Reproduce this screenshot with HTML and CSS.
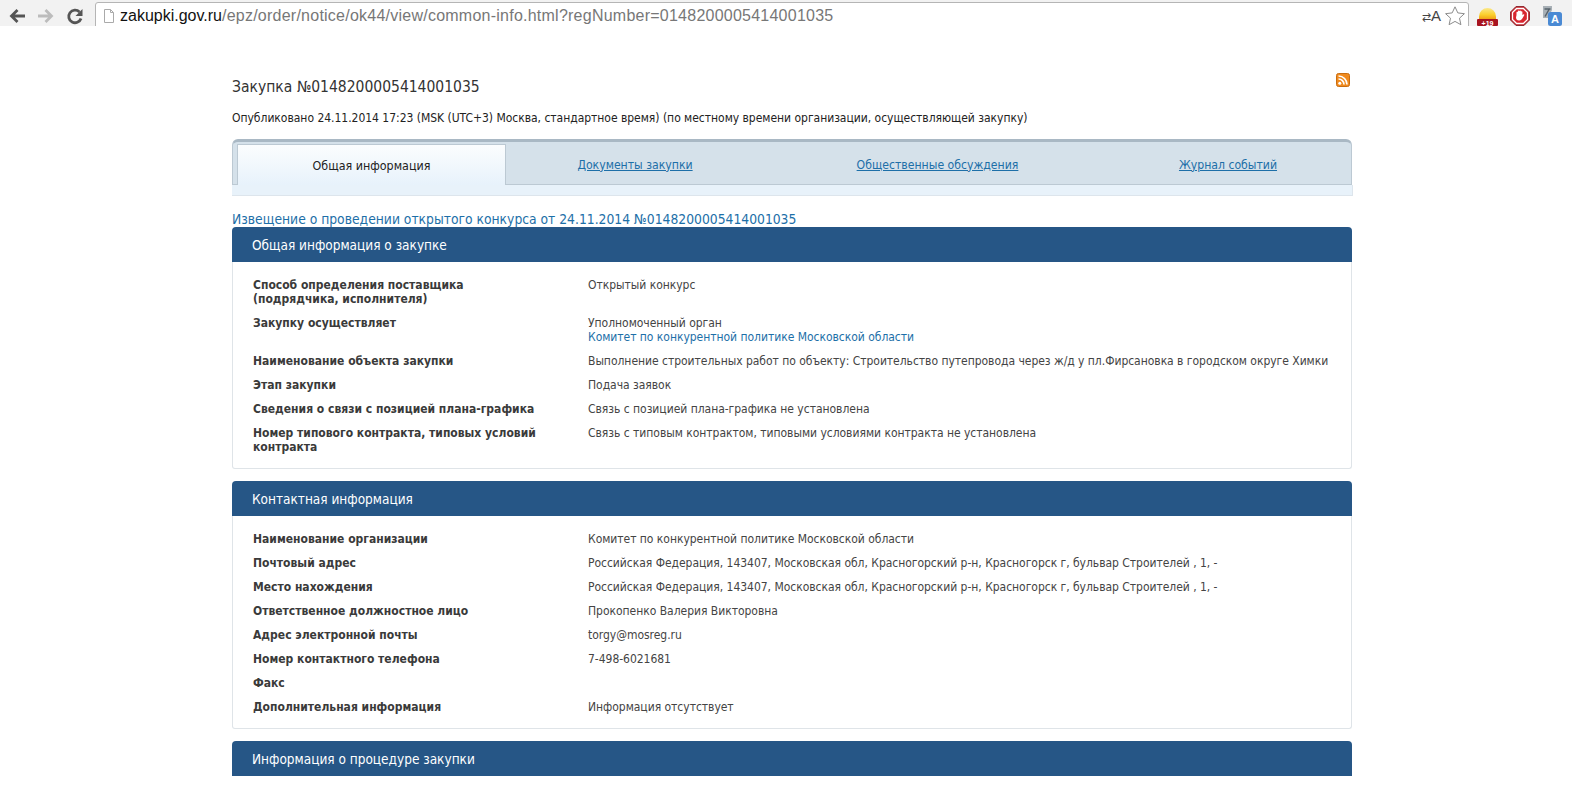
FILE: index.html
```html
<!DOCTYPE html>
<html lang="ru">
<head>
<meta charset="utf-8">
<title>Закупка</title>
<link rel="stylesheet" href="styles.css">
</head>
<body>
<header class="chrome">
  <div class="nav">
    <svg class="nav-icon" viewBox="0 0 18 18"><path d="M17 9H4M9.500 3L3.500 9l6 6" fill="none" stroke="#555" stroke-width="2.800"/></svg>
    <svg class="nav-icon" viewBox="0 0 18 18"><path d="M1 9h13M8.500 3l6 6-6 6" fill="none" stroke="#bcbcbc" stroke-width="2.800"/></svg>
    <svg class="nav-icon" viewBox="0 0 18 18"><path d="M15 11.500A6.300 6.300 0 1 1 13.500 5" fill="none" stroke="#555" stroke-width="2.800"/><path d="M16.500 2v7H9.500z" fill="#555"/></svg>
  </div>
  <div class="omnibox">
    <svg class="page-icon" viewBox="0 0 12 14"><path d="M1.500.5h6l3 3v10h-9z" fill="#fff" stroke="#aaa"/><path d="M7.500.5v3h3" fill="none" stroke="#aaa"/></svg>
    <div class="url"><span class="host">zakupki.gov.ru</span><span class="path">/epz/order/notice/ok44/view/common-info.html?regNumber=0148200005414001035</span></div>
    <span class="translate-mark"><span class="translate-arrows">⇄</span>A</span>
    <svg class="star" viewBox="0 0 20 20"><path d="M10 .8l2.800 6.100 6.600.8-4.900 4.500 1.400 6.500L10 15.400l-5.900 3.300 1.400-6.500L.6 7.700l6.600-.8z" fill="#fff" stroke="#8c8c8c"/></svg>
  </div>
  <div class="extensions">
    <svg class="ext ext-sun" viewBox="0 0 21 20">
      <defs><linearGradient id="sun" x1="0" y1="0" x2="0" y2="1"><stop offset="0" stop-color="#fbe88a"/><stop offset=".55" stop-color="#fbd02e"/><stop offset="1" stop-color="#ee9a12"/></linearGradient></defs>
      <path d="M2 14V10.500a8.500 8.500 0 0 1 17 0V14z" fill="url(#sun)"/>
      <rect x="0" y="13" width="21" height="7" rx="1" fill="#a81420"/>
      <text x="10.500" y="19.500" class="ext-text">+19</text>
    </svg>
    <svg class="ext" viewBox="0 0 20 20"><path d="M6 .5h8L19.500 6v8L14 19.500H6L.5 14V6z" fill="#c4202a" stroke="#8f2a30"/><path d="M6.600 2.500h6.800L17.500 6.600v6.800l-4.100 4.100H6.600L2.500 13.400V6.600z" fill="#d8262f" stroke="#fff" stroke-width="1.300"/><path d="M6.500 9V6.500a.8.8 0 0 1 1.400-.5V5a.8.8 0 0 1 1.500 0 .8.800 0 0 1 1.500 0v.6a.8.800 0 0 1 1.500.4V9l.9-.6c.7-.3 1.200.3.900.9l-1.700 3c-.8 1.200-1.500 2.200-3.300 2.200-2.500 0-3.200-1.600-3.200-3z" fill="#fff"/></svg>
    <svg class="ext" viewBox="0 0 20 20"><path d="M1 0h9v4L6 12H1z" fill="#a8b0b6"/><path d="M2.500 3h6M7 3.500L3 10.500" fill="none" stroke="#56616b" stroke-width="1.500"/><rect x="6" y="6" width="14" height="14" rx="2.500" fill="#4a8ad4"/><text x="13" y="17" class="ext-a">A</text></svg>
  </div>
</header>

<main class="page">
  <div class="title-row">
    <h1 class="title">Закупка №0148200005414001035</h1>
    <svg class="rss" viewBox="0 0 14 14"><rect x=".5" y=".5" width="13" height="13" rx="2" fill="#f08a1d" stroke="#c96d10"/><circle cx="3.800" cy="10.200" r="1.500" fill="#fff"/><path d="M2.500 6a5.500 5.500 0 0 1 5.500 5.500M2.500 3a8.500 8.500 0 0 1 8.500 8.500" fill="none" stroke="#fff" stroke-width="1.700"/></svg>
  </div>
  <p class="published">Опубликовано 24.11.2014 17:23 (MSK (UTC+3) Москва, стандартное время) (по местному времени организации, осуществляющей закупку)</p>

  <nav class="tabs">
    <div class="tab tab-active">Общая информация</div>
    <a class="tab tab-docs" href="#">Документы закупки</a>
    <a class="tab tab-public" href="#">Общественные обсуждения</a>
    <a class="tab tab-log" href="#">Журнал событий</a>
  </nav>
  <div class="tab-foot"></div>

  <a class="notice" href="#">Извещение о проведении открытого конкурса от 24.11.2014 №0148200005414001035</a>

  <section class="panel">
    <h2 class="panel-head">Общая информация о закупке</h2>
    <div class="panel-body">
      <div class="row"><div class="label">Способ определения поставщика (подрядчика, исполнителя)</div><div class="value">Открытый конкурс</div></div>
      <div class="row"><div class="label">Закупку осуществляет</div><div class="value">Уполномоченный орган<br><a class="value-link" href="#">Комитет по конкурентной политике Московской области</a></div></div>
      <div class="row"><div class="label">Наименование объекта закупки</div><div class="value">Выполнение строительных работ по объекту: Строительство путепровода через ж/д у пл.Фирсановка в городском округе Химки</div></div>
      <div class="row"><div class="label">Этап закупки</div><div class="value">Подача заявок</div></div>
      <div class="row"><div class="label">Сведения о связи с позицией плана-графика</div><div class="value">Связь с позицией плана-графика не установлена</div></div>
      <div class="row"><div class="label">Номер типового контракта, типовых условий контракта</div><div class="value">Связь с типовым контрактом, типовыми условиями контракта не установлена</div></div>
    </div>
  </section>

  <section class="panel">
    <h2 class="panel-head">Контактная информация</h2>
    <div class="panel-body">
      <div class="row"><div class="label">Наименование организации</div><div class="value">Комитет по конкурентной политике Московской области</div></div>
      <div class="row"><div class="label">Почтовый адрес</div><div class="value">Российская Федерация, 143407, Московская обл, Красногорский р-н, Красногорск г, бульвар Строителей , 1, -</div></div>
      <div class="row"><div class="label">Место нахождения</div><div class="value">Российская Федерация, 143407, Московская обл, Красногорский р-н, Красногорск г, бульвар Строителей , 1, -</div></div>
      <div class="row"><div class="label">Ответственное должностное лицо</div><div class="value">Прокопенко Валерия Викторовна</div></div>
      <div class="row"><div class="label">Адрес электронной почты</div><div class="value">torgy@mosreg.ru</div></div>
      <div class="row"><div class="label">Номер контактного телефона</div><div class="value">7-498-6021681</div></div>
      <div class="row"><div class="label">Факс</div><div class="value"></div></div>
      <div class="row"><div class="label">Дополнительная информация</div><div class="value">Информация отсутствует</div></div>
    </div>
  </section>

  <section class="panel">
    <h2 class="panel-head">Информация о процедуре закупки</h2>
  </section>
</main>
</body>
</html>
```

FILE: styles.css
```css
* { box-sizing: border-box; }
html, body { margin: 0; height: 789px; overflow: hidden; background: #fff; }
body { font-family: "DejaVu Sans", sans-serif; font-stretch: condensed; font-size: 12px; color: #333; }
a { color: #1d6fa8; }

.chrome { height: 26px; background: #f2f2f2; display: flex; align-items: flex-start; overflow: hidden; font-stretch: normal; }
.nav { width: 95px; display: flex; gap: 11px; padding: 7px 0 0 8px; flex: none; }
.nav-icon { width: 18px; height: 18px; flex: none; }
.omnibox { width: 1374px; height: 30px; margin-top: 2px; background: #fff; border: 1px solid #b5b5b5; border-radius: 3px 3px 0 0; display: flex; align-items: flex-start; padding: 3px 3px 0 7px; flex: none; }
.page-icon { width: 12px; height: 14px; margin: 3px 5px 0 0; flex: none; }
.url { flex: 1; font-family: "Liberation Sans", sans-serif; font-size: 16px; line-height: 20px; white-space: nowrap; }
.host { color: #111; }
.path { color: #777; letter-spacing: .24px; }
.translate-mark { font-family: "Liberation Sans", sans-serif; font-size: 15px; line-height: 20px; color: #444; margin-right: 4px; }
.translate-arrows { font-size: 11px; }
.star { width: 20px; height: 20px; flex: none; }
.extensions { display: flex; gap: 12px; padding: 6px 0 0 8px; }
.ext { width: 20px; height: 20px; flex: none; }
.ext-sun { width: 21px; }
.ext-text { font-family: "Liberation Sans", sans-serif; font-size: 7px; font-weight: 700; fill: #fff; text-anchor: middle; }
.ext-a { font-family: "Liberation Sans", sans-serif; font-size: 11px; font-weight: 700; fill: #fff; text-anchor: middle; }

.page { width: 1120px; margin-left: 232px; }
.title-row { display: flex; justify-content: space-between; align-items: flex-start; padding-top: 50px; }
.title { margin: 0; font-size: 15.500px; line-height: 22px; font-weight: 400; color: #333; }
.rss { width: 14px; height: 14px; margin: -3px 2px 0 0; flex: none; }
.published { margin: 13px 0 0; line-height: 14px; color: #222; letter-spacing: -.025px; }

.tabs { margin-top: 14px; height: 46px; background: #d5e1ea; border-top: 3px solid #a9b8c4; border-left: 1px solid #bcc9d3; border-right: 1px solid #bcc9d3; border-bottom: 1px solid #bcc9d3; border-radius: 6px 6px 0 0; display: flex; align-items: flex-start; padding-left: 4px; }
.tab { height: 45px; display: flex; align-items: center; justify-content: center; font-size: 12.150px; }
.tab-active { width: 269px; margin-top: 2px; height: 41px; padding-top: 1px; font-size: 12.400px; background: linear-gradient(#fbfdfe, #e7f2fb); border: 1px solid #bcc9d3; border-bottom: 0; color: #222; }
.tab-docs { width: 258px; }
.tab-public { width: 347px; }
.tab-log { width: 234px; }
.tab-foot { height: 11px; margin-right: -1px; background: #e8f2fa; border-right: 1px solid #dde5ec; border-bottom: 1px solid #dde5ec; }

.notice { display: block; margin-top: 16px; height: 15px; line-height: 15px; font-size: 13.750px; text-decoration: none; }

.panel { margin-bottom: 12px; }
.panel-head { margin: 0; height: 35px; padding: 1px 0 0 20px; background: #265686; border-radius: 4px 4px 0 0; color: #fff; font-size: 13.500px; font-weight: 400; line-height: 35px; }
.panel-body { border: 1px solid #dfe4e8; border-top: 0; border-radius: 0 0 3px 3px; padding: 16px 10px 4px 20px; }
.row { display: flex; padding-bottom: 10px; line-height: 14px; }
.label { width: 335px; padding-right: 48px; font-weight: 700; color: #3a3a3a; flex: none; }
.value { flex: 1; color: #444; letter-spacing: -.03px; }
.value-link { text-decoration: none; }
```
